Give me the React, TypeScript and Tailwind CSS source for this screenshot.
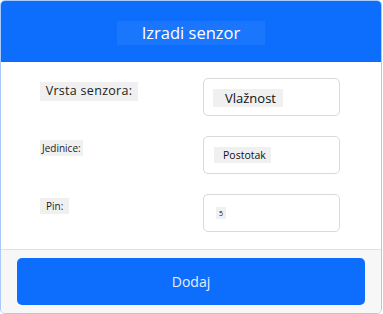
import React from "react";

function Row({ label, labelCls, value, valueCls }: { label: string; labelCls: string; value: string; valueCls: string }) {
  return (
    <div className="flex h-[38px] items-start">
      <div className="flex w-[202px] items-start pl-[39px] pt-[4px]">
        <span className={"flex items-center bg-[#f0f0f0] leading-none text-[#222] " + labelCls}>{label}</span>
      </div>
      <div className="flex h-[38px] w-[137px] items-start rounded-[5px] border border-[#d9d9d9] bg-white">
        <span className={"flex items-center bg-[#f0f0f0] leading-none text-[#111] " + valueCls}>{value}</span>
      </div>
    </div>
  );
}

export default function App() {
  return (
    <div className="h-[314px] w-[383px] bg-white" style={{ fontFamily: '"Open Sans", "Noto Sans", sans-serif' }}>
      <div className="flex h-[314px] w-[382px] flex-col overflow-hidden rounded-[5px] border border-[#a9c9f7]">
        <div className="flex h-[61px] shrink-0 items-center justify-center bg-[#0d6efd]">
          <span className="mt-[3px] flex h-[24px] w-[148px] items-center justify-center bg-[#1a76fd] text-[16.5px] text-white">
            Izradi senzor
          </span>
        </div>
        <div className="flex h-[187px] shrink-0 flex-col gap-[20px] bg-white pt-[16px]">
          <Row
            label="Vrsta senzora:"
            labelCls="h-[19px] w-[98px] justify-center text-[12.5px] tracking-[0.3px]"
            value="Vlažnost"
            valueCls="ml-[9px] mt-[10px] h-[18px] w-[70px] pl-[12px] text-[13px]"
          />
          <Row
            label="Jedinice:"
            labelCls="h-[16px] px-[2px] text-[10px]"
            value="Postotak"
            valueCls="ml-[10px] mt-[10px] h-[16px] w-[57px] pl-[9px] text-[10.5px]"
          />
          <Row
            label="Pin:"
            labelCls="h-[16px] px-[6px] text-[10px]"
            value="5"
            valueCls="ml-[12px] mt-[12px] h-[12px] w-[10px] justify-center text-[7px]"
          />
        </div>
        <div className="flex flex-1 border-t border-[#dee2e6] bg-[#f7f7f7] px-[16px] pt-[8px] pb-[8px]">
          <button className="flex h-[47px] w-full items-center justify-center rounded-[5px] bg-[#0d6efd] text-[14px] text-[#e6efff]">
            Dodaj
          </button>
        </div>
      </div>
    </div>
  );
}
